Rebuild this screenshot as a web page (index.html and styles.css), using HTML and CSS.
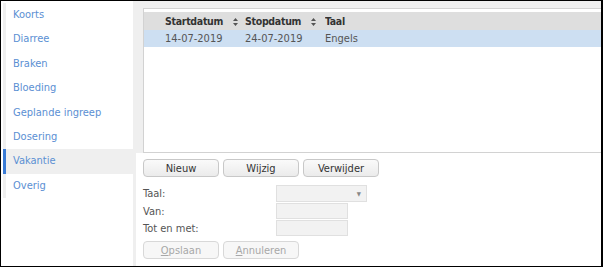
FILE: index.html
```html
<!DOCTYPE html>
<html lang="nl">
<head>
    <meta charset="UTF-8">
    <title>Vakantie</title>
    <link rel="stylesheet" href="styles.css">
</head>
<body>

<div class="frame">
    <div class="sidebar">
        <ul class="nav">
            <li>Koorts</li>
            <li>Diarree</li>
            <li>Braken</li>
            <li>Bloeding</li>
            <li>Geplande ingreep</li>
            <li>Dosering</li>
            <li class="active">Vakantie</li>
            <li>Overig</li>
        </ul>
    </div>

    <div class="main">
        <div class="list-panel">
            <div class="list-box">
                <table class="grid">
                    <tr class="head">
                        <th class="sel"></th>
                        <th class="c1">Startdatum<svg class="sort" width="5" height="8" viewBox="0 0 5 8"><path d="M2.5 0 L5 3 L0 3 Z M0 5 L5 5 L2.5 8 Z" fill="#555"/></svg></th>
                        <th class="c2">Stopdatum<svg class="sort" width="5" height="8" viewBox="0 0 5 8"><path d="M2.5 0 L5 3 L0 3 Z M0 5 L5 5 L2.5 8 Z" fill="#555"/></svg></th>
                        <th>Taal</th>
                    </tr>
                    <tr class="row selected">
                        <td class="sel"></td>
                        <td>14-07-2019</td>
                        <td>24-07-2019</td>
                        <td>Engels</td>
                    </tr>
                </table>
            </div>
        </div>

        <div class="content">
            <div class="buttons">
                <button>Nieuw</button>
                <button>Wijzig</button>
                <button>Verwijder</button>
            </div>

            <div class="form">
                <label>Taal:</label>
                <div class="select"><span class="arrow">&#9660;</span></div>
                <label>Van:</label>
                <div class="input"></div>
                <label>Tot en met:</label>
                <div class="input"></div>
            </div>

            <div class="buttons">
                <button disabled><u>O</u>pslaan</button>
                <button disabled><u>A</u>nnuleren</button>
            </div>
        </div>
    </div>
</div>

</body>
</html>
```

FILE: styles.css
```css
body {
    margin: 0;
    font-family: "DejaVu Sans Condensed", "DejaVu Sans", sans-serif;
    font-size: 11px;
    background-color: #fff;
}
.frame {
    box-sizing: border-box;
    width: 603px;
    height: 267px;
    border: 1px solid #000;
    border-right-width: 2px;
    display: flex;
    overflow: hidden;
}
.sidebar {
    width: 132px;
    flex-shrink: 0;
    padding: 2px 0 0 2px;
    box-sizing: border-box;
}
.nav {
    list-style: none;
    margin: 0;
    padding: 0;
    border-left: 3px solid #efefef;
}
.nav li {
    height: 24.4px;
    line-height: 24.4px;
    padding-left: 7px;
    color: #5b8fd3;
}
.nav li.active {
    background-color: #efefef;
    margin-left: -3px;
    border-left: 3px solid #3a7bd5;
}
.main {
    flex: 1;
    border-left: 3px solid #efefef;
    min-width: 0;
}
.list-panel {
    background-color: #efefef;
    padding: 7px 0 0 7px;
}
.list-box {
    background-color: #fff;
    border: 1px solid #d2d2d2;
    border-right: none;
    height: 145px;
    padding-top: 3px;
    box-sizing: border-box;
}
.grid {
    border-collapse: collapse;
    table-layout: fixed;
    width: 100%;
}
.grid th, .grid td {
    padding: 0;
    text-align: left;
    white-space: nowrap;
    overflow: hidden;
}
.grid .sel {
    width: 21px;
}
.grid .c1, .grid .c2 {
    width: 80px;
}
.head th {
    background-color: #dedede;
    color: #333;
    font-weight: bold;
    font-size: 10.5px;
    letter-spacing: -0.3px;
    height: 18px;
}
.sort {
    margin-left: 10px;
    vertical-align: -1px;
}
.row td {
    height: 17px;
    color: #555;
}
.row.selected td {
    background-color: #cddff2;
}
.content {
    padding: 6px 0 0 7px;
}
.buttons {
    display: flex;
    gap: 4px;
}
button {
    box-sizing: border-box;
    width: 76px;
    height: 18px;
    padding: 0;
    font-family: inherit;
    font-size: 11px;
    color: #333;
    background: linear-gradient(#fafafa, #ebebeb);
    border: 1px solid #c8c8c8;
    border-radius: 4px;
}
button:disabled {
    color: #a8a8a8;
    background: #f7f7f7;
    border-color: #d8d8d8;
}
.form {
    display: grid;
    grid-template-columns: 133px auto;
    row-gap: 1px;
    margin: 8px 0 5px;
    align-items: center;
    justify-items: start;
}
.form label {
    color: #555;
}
.select, .input {
    box-sizing: border-box;
    height: 16px;
    background-color: #f2f2f2;
    border: 1px solid #e0e0e0;
}
.select {
    width: 91px;
    height: 17px;
    text-align: right;
    padding-right: 5px;
}
.arrow {
    font-size: 6px;
    color: #888;
    line-height: 15px;
}
.input {
    width: 72px;
}
```
